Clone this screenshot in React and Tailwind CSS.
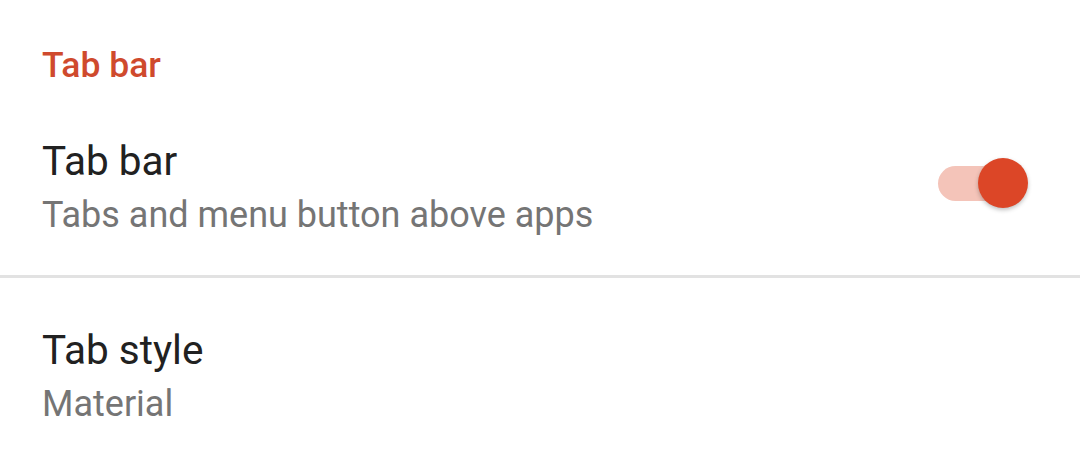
import React from 'react'

const Toggle = () => (
  <div className="relative w-[90px] h-[50px] shrink-0">
    <div className="absolute left-0 top-[8px] w-[84px] h-[35px] rounded-full bg-[#f4c4b9]" />
    <div className="absolute right-0 top-0 w-[50px] h-[50px] rounded-full bg-[#dc4627] shadow-[0_2px_4px_rgba(0,0,0,0.25)]" />
  </div>
)

export default function App() {
  return (
    <div className="w-[1080px] h-[461px] bg-white overflow-hidden font-['Roboto',sans-serif]">
      <div className="pt-[45px] pl-[42px] h-[85px]">
        <div className="text-[35.5px] leading-[40px] font-medium text-[#cf4a2d]">Tab bar</div>
      </div>

      <div className="flex items-center justify-between pl-[42px] pr-[52px] pt-[52px] pb-[38px]">
        <div>
          <div className="text-[40.5px] leading-[48px] text-[#212121]">Tab bar</div>
          <div className="mt-[8px] text-[36px] leading-[44px] text-[#757575]">Tabs and menu button above apps</div>
        </div>
        <div className="-mt-[8px]">
          <Toggle />
        </div>
      </div>

      <div className="h-[3px] bg-[#e2e2e2]" />

      <div className="pl-[42px] pt-[48px]">
        <div className="text-[40.5px] leading-[48px] text-[#212121]">Tab style</div>
        <div className="mt-[8px] text-[36px] leading-[44px] text-[#757575]">Material</div>
      </div>
    </div>
  )
}
